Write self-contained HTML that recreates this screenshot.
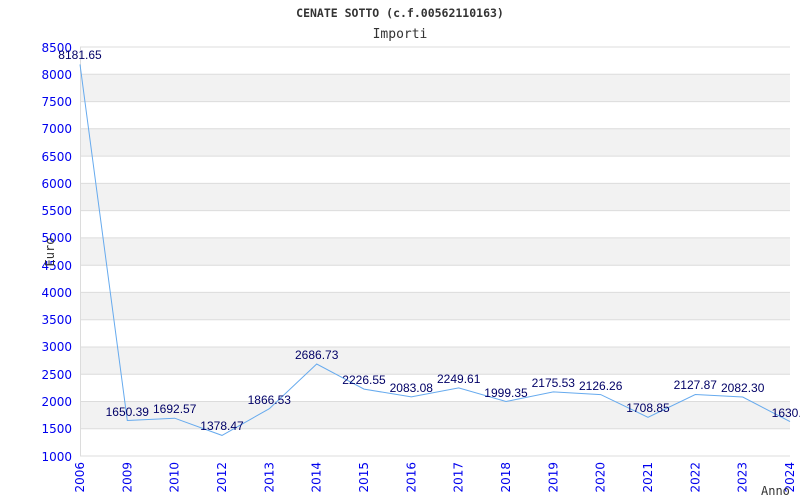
<!DOCTYPE html>
<html><head><meta charset="utf-8"><style>
html,body{margin:0;padding:0;background:#fff;width:800px;height:500px;overflow:hidden}
svg{display:block}
.ax{font-family:"DejaVu Sans","Liberation Sans",sans-serif;font-size:12px;fill:#0000ee}
.lb{font-family:"Liberation Sans",sans-serif;font-size:12px;fill:#000066;text-anchor:middle}
.mono{font-family:"DejaVu Sans Mono","Liberation Mono",monospace;fill:#333}
</style></head><body>
<svg width="800" height="500" xmlns="http://www.w3.org/2000/svg">
<text x="400" y="17" class="mono" font-size="11.5" font-weight="bold" text-anchor="middle" fill="#222">CENATE SOTTO (c.f.00562110163)</text>
<text x="400" y="38" class="mono" font-size="13" text-anchor="middle">Importi</text>
<g fill="#f2f2f2">
<rect x="80" y="74.3" width="710" height="27.3"/>
<rect x="80" y="128.8" width="710" height="27.3"/>
<rect x="80" y="183.4" width="710" height="27.3"/>
<rect x="80" y="237.9" width="710" height="27.3"/>
<rect x="80" y="292.4" width="710" height="27.3"/>
<rect x="80" y="347.0" width="710" height="27.3"/>
<rect x="80" y="401.5" width="710" height="27.3"/>
</g>
<g stroke="#dcdcdc" stroke-width="1">
<line x1="80" x2="790" y1="47" y2="47"/><line x1="80" x2="790" y1="74.3" y2="74.3"/><line x1="80" x2="790" y1="101.6" y2="101.6"/><line x1="80" x2="790" y1="128.8" y2="128.8"/><line x1="80" x2="790" y1="156.1" y2="156.1"/><line x1="80" x2="790" y1="183.4" y2="183.4"/><line x1="80" x2="790" y1="210.6" y2="210.6"/><line x1="80" x2="790" y1="237.9" y2="237.9"/><line x1="80" x2="790" y1="265.2" y2="265.2"/><line x1="80" x2="790" y1="292.4" y2="292.4"/><line x1="80" x2="790" y1="319.7" y2="319.7"/><line x1="80" x2="790" y1="347" y2="347"/><line x1="80" x2="790" y1="374.2" y2="374.2"/><line x1="80" x2="790" y1="401.5" y2="401.5"/><line x1="80" x2="790" y1="428.8" y2="428.8"/>
<line x1="80.5" x2="80.5" y1="47" y2="456"/><line x1="80" x2="790" y1="456" y2="456"/>
</g>
<g class="ax" text-anchor="end">
<text x="72" y="52">8500</text><text x="72" y="79">8000</text><text x="72" y="106">7500</text><text x="72" y="133">7000</text><text x="72" y="161">6500</text><text x="72" y="188">6000</text><text x="72" y="215">5500</text><text x="72" y="242">5000</text><text x="72" y="270">4500</text><text x="72" y="297">4000</text><text x="72" y="324">3500</text><text x="72" y="351">3000</text><text x="72" y="379">2500</text><text x="72" y="406">2000</text><text x="72" y="433">1500</text><text x="72" y="461">1000</text>
</g>
<g class="ax" text-anchor="end">
<text transform="translate(84,462) rotate(-90)">2006</text>
<text transform="translate(131.3,462) rotate(-90)">2009</text>
<text transform="translate(178.7,462) rotate(-90)">2010</text>
<text transform="translate(226,462) rotate(-90)">2012</text>
<text transform="translate(273.3,462) rotate(-90)">2013</text>
<text transform="translate(320.7,462) rotate(-90)">2014</text>
<text transform="translate(368,462) rotate(-90)">2015</text>
<text transform="translate(415.3,462) rotate(-90)">2016</text>
<text transform="translate(462.7,462) rotate(-90)">2017</text>
<text transform="translate(510,462) rotate(-90)">2018</text>
<text transform="translate(557.3,462) rotate(-90)">2019</text>
<text transform="translate(604.7,462) rotate(-90)">2020</text>
<text transform="translate(652,462) rotate(-90)">2021</text>
<text transform="translate(699.3,462) rotate(-90)">2022</text>
<text transform="translate(746.7,462) rotate(-90)">2023</text>
<text transform="translate(794,462) rotate(-90)">2024</text>
</g>
<text transform="translate(54,252) rotate(-90)" class="mono" font-size="12" text-anchor="middle">Euro</text>
<text x="761" y="495" class="mono" font-size="12">Anno</text>
<polyline fill="none" stroke="#66aaee" stroke-width="1" points="80,64.4 127.3,420.5 174.7,418.2 222,435.4 269.3,408.7 316.7,364 364,389.1 411.3,396.9 458.7,387.9 506,401.5 553.3,391.9 600.7,394.6 648,417.3 695.3,394.5 742.7,397 790,421.6"/>
<g class="lb">
<text x="80" y="59">8181.65</text>
<text x="127.3" y="416">1650.39</text>
<text x="174.7" y="413">1692.57</text>
<text x="222" y="430">1378.47</text>
<text x="269.3" y="404">1866.53</text>
<text x="316.7" y="359">2686.73</text>
<text x="364" y="384">2226.55</text>
<text x="411.3" y="392">2083.08</text>
<text x="458.7" y="383">2249.61</text>
<text x="506" y="397">1999.35</text>
<text x="553.3" y="387">2175.53</text>
<text x="600.7" y="390">2126.26</text>
<text x="648" y="412">1708.85</text>
<text x="695.3" y="389">2127.87</text>
<text x="742.7" y="392">2082.30</text>
<text x="790" y="417">1630.4</text>
</g>
</svg>
</body></html>
